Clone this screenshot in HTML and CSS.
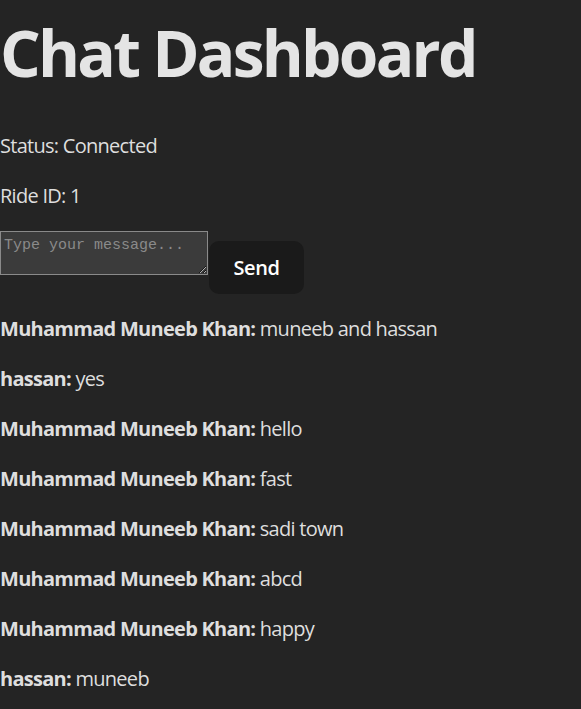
FILE: index.html
```html
<!DOCTYPE html>
<html lang="en">
<head>
<meta charset="utf-8">
<title>Chat Dashboard</title>
<link rel="stylesheet" href="styles.css">
</head>
<body>
<div class="app">
  <h1 class="title">Chat Dashboard</h1>
  <p class="line">Status: Connected</p>
  <p class="line">Ride ID: 1</p>
  <div class="composer">
    <textarea class="input" placeholder="Type your message..."></textarea>
    <button class="send">Send</button>
  </div>
  <div class="messages">
    <p class="line"><strong>Muhammad Muneeb Khan:</strong> muneeb and hassan</p>
    <p class="line"><strong>hassan:</strong> yes</p>
    <p class="line"><strong>Muhammad Muneeb Khan:</strong> hello</p>
    <p class="line"><strong>Muhammad Muneeb Khan:</strong> fast</p>
    <p class="line"><strong>Muhammad Muneeb Khan:</strong> sadi town</p>
    <p class="line"><strong>Muhammad Muneeb Khan:</strong> abcd</p>
    <p class="line"><strong>Muhammad Muneeb Khan:</strong> happy</p>
    <p class="line"><strong>hassan:</strong> muneeb</p>
  </div>
</div>
</body>
</html>
```
FILE: styles.css
```css
html, body {
  margin: 0;
  padding: 0;
  background: #242424;
}
body {
  font-family: "Open Sans", "Noto Sans", sans-serif;
  font-size: 20px;
  line-height: 1.5;
  letter-spacing: -0.036em;
  color: #dedede;
  overflow: hidden;
}
.title {
  font-size: 64px;
  line-height: 1.1;
  font-weight: 700;
  letter-spacing: -0.043em;
  margin: 18px 0 43px;
  color: #e4e4e4;
}
.line {
  margin: 20px 0;
}
.line strong {
  font-weight: 700;
}
.composer {
  display: flex;
  align-items: flex-start;
  margin-top: 16px;
}
.input {
  width: 208px;
  height: 44px;
  box-sizing: border-box;
  background: #3b3b3b;
  border: 1px solid #8a8a8a;
  margin: 0;
  padding: 5px 3px 2px;
  font-family: "Liberation Mono", monospace;
  font-size: 15px;
  letter-spacing: 0;
  color: #ddd;
}
.input::placeholder {
  color: #8a8a8a;
}
.send {
  margin-top: 10px;
  margin-left: 1px;
  width: 95px;
  height: 53px;
  border: none;
  border-radius: 10px;
  background: #1a1a1a;
  color: #fff;
  font-family: "Open Sans", sans-serif;
  font-size: 20px;
  font-weight: 600;
  letter-spacing: -0.02em;
}
.messages {
  margin-top: 20px;
}
```
